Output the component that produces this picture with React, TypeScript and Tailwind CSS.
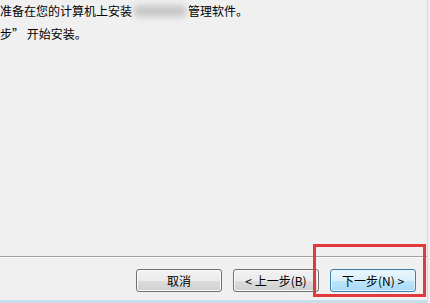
export default function App() {
  const font = { fontFamily: '"Noto Sans CJK SC", "Liberation Sans", sans-serif' };
  const btn =
    "flex h-[23px] w-[86px] items-center justify-center rounded-[3px] border border-[#707070] text-[12px] text-black bg-[linear-gradient(to_bottom,#f2f2f2_0%,#ebebeb_50%,#dddddd_51%,#cfcfcf_100%)] shadow-[inset_0_0_0_1px_#fcfcfc]";
  return (
    <div className="relative h-[303px] w-[430px] overflow-hidden bg-[#f0f0f0]" style={font}>
      <div className="flex h-full w-[428px] flex-col border-r border-[#c9dcea]">
        <div className="flex h-[256px] flex-col gap-[7px] pt-[3px] text-[12px] leading-[16px] text-black">
          <div className="flex items-center">
            <span>准备在您的计算机上安装</span>
            <span className="mx-[2px] h-[12px] w-[52px] rounded-sm bg-[#c8c8c8] blur-[3px]" />
            <span>管理软件。</span>
          </div>
          <div>步” 开始安装。</div>
        </div>
        <div className="h-px bg-[#a0a0a0]" />
        <div className="h-px bg-white" />
        <div className="flex flex-1 items-start justify-end gap-[11px] pr-[11px] pt-[11px]">
          <button className={btn}>取消</button>
          <button className={btn}>&lt; 上一步(B)</button>
          <button className="flex h-[23px] w-[86px] items-center justify-center rounded-[3px] border border-[#3c7fb1] text-[12px] text-black bg-[linear-gradient(to_bottom,#eaf6fd_0%,#d9f0fc_50%,#bee6fd_51%,#a7d9f5_100%)] shadow-[inset_0_0_0_1px_#e4f4fc]">
            下一步(N) &gt;
          </button>
        </div>
        <div className="h-px bg-[#eef4fa]" />
        <div className="h-[3px] bg-[#c9dcea]" />
      </div>
      <div className="absolute left-[313px] top-[244px] h-[53px] w-[113px] border-[3px] border-[#e2393c]" />
    </div>
  );
}
